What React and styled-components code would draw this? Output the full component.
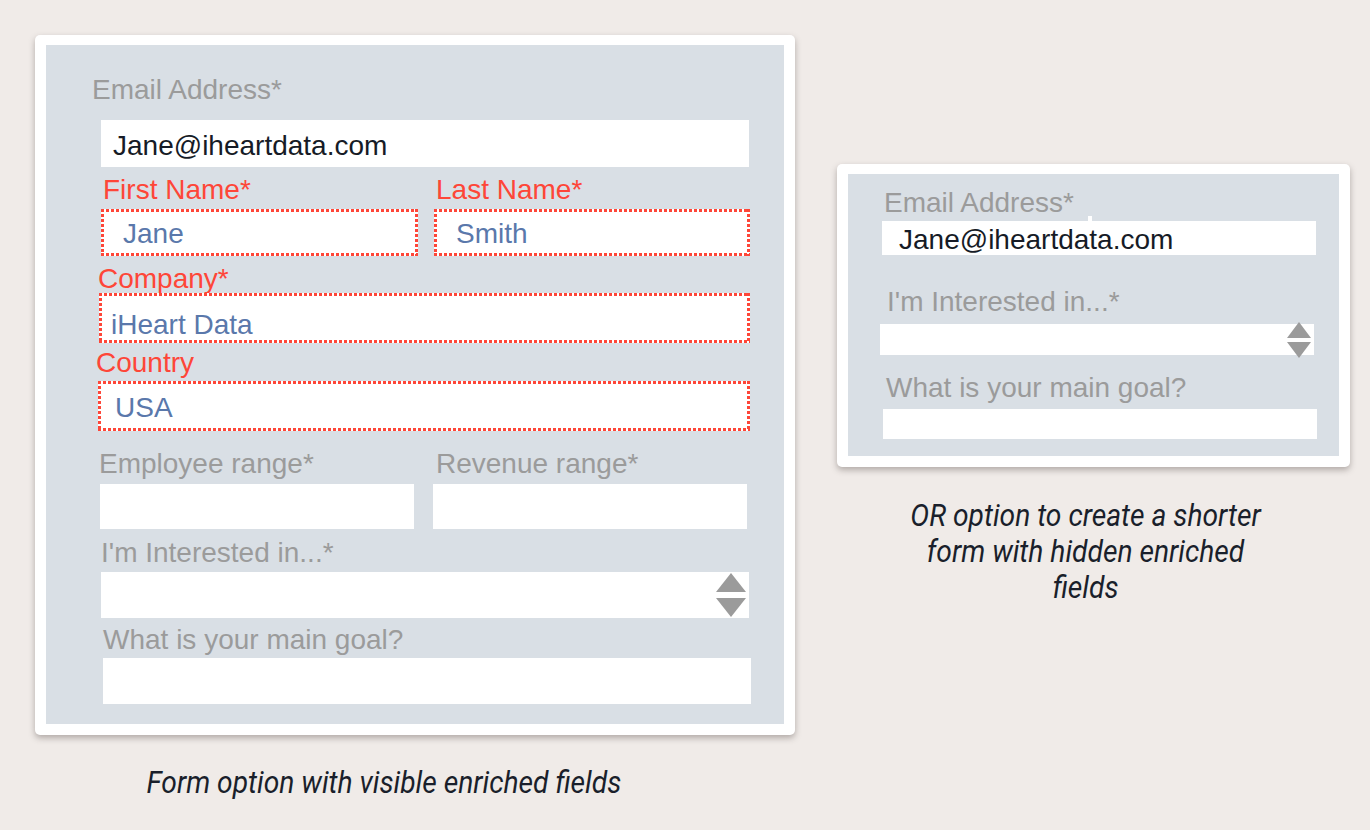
import React from 'react';
import styled, { createGlobalStyle, css } from 'styled-components';

const GlobalStyle = createGlobalStyle`
    html, body {
        margin: 0;
        padding: 0;
        background: #f0ebe8;
        font-family: "Liberation Sans", Arial, sans-serif;
    }
`;

const RED = '#fe4638';

const Page = styled.div`
    display: flex;
    align-items: flex-start;
    padding: 35px 0 0 35px;
    min-height: 100vh;
    box-sizing: border-box;
    background: #f0ebe8;
`;

const Column = styled.div`
    display: flex;
    flex-direction: column;
    margin-top: ${p => p.$top || 0}px;
    margin-left: ${p => p.$left || 0}px;
`;

const Frame = styled.div`
    background: #fff;
    padding: 10px 11px 11px 11px;
    border-radius: 5px;
    box-shadow: 0 3px 6px rgba(60, 50, 45, 0.35);
`;

const Panel = styled.div`
    width: ${p => p.$width}px;
    box-sizing: border-box;
    background: #d9dfe5;
    padding: ${p => p.$pad};
    display: flex;
    flex-direction: column;
`;

const Row = styled.div`
    display: flex;
    gap: ${p => p.$gap}px;
    margin-top: ${p => p.$mt || 0}px;
`;

const Field = styled.div`
    display: flex;
    flex-direction: column;
    margin-top: ${p => p.$mt || 0}px;
`;

const Label = styled.div`
    font-size: 28px;
    line-height: 28px;
    height: 28px;
    white-space: nowrap;
    color: ${p => (p.$red ? RED : '#9b9b9b')};
    margin-left: ${p => p.$dx || 0}px;
    margin-bottom: ${p => p.$gap || 0}px;
`;

// square red dots along every edge, like the mockup's dotted outline
const dotted = css`
    background:
        repeating-linear-gradient(90deg, ${RED} 0 3px, transparent 3px 5px) left top / 100% 3px no-repeat,
        repeating-linear-gradient(90deg, ${RED} 0 3px, transparent 3px 5px) left bottom / 100% 3px no-repeat,
        repeating-linear-gradient(180deg, ${RED} 0 3px, transparent 3px 5px) left top / 3px 100% no-repeat,
        repeating-linear-gradient(180deg, ${RED} 0 3px, transparent 3px 5px) right top / 3px 100% no-repeat,
        #fff;
`;

const Box = styled.div`
    position: relative;
    box-sizing: border-box;
    width: ${p => p.$w}px;
    height: ${p => p.$h}px;
    margin-left: ${p => p.$dx || 0}px;
    background: #fff;
    ${p => p.$dotted && dotted}
    padding: ${p => p.$pad || '0 0 0 12px'};
    display: flex;
    align-items: center;
    font-size: 28px;
    line-height: 32px;
    color: ${p => (p.$filled ? '#5a78ab' : '#161b26')};
    white-space: nowrap;
`;

const Tick = styled.span`
    position: absolute;
    left: 206px;
    top: -5px;
    width: 4px;
    height: 5px;
    background: #fff;
`;

const SpinnerWrap = styled.div`
    position: absolute;
    right: 3px;
    top: 50%;
    transform: translateY(-50%);
    display: flex;
    flex-direction: column;
    gap: ${p => p.$gap}px;
`;

const Caption = styled.div`
    width: ${p => p.$width}px;
    margin-top: ${p => p.$mt}px;
    text-align: center;
    font-family: "Roboto", "Liberation Sans", sans-serif;
    font-style: italic;
    font-size: 31px;
    line-height: 36px;
    color: #1a1f2b;
`;

const CaptionText = styled.span`
    display: inline-block;
    transform: scaleX(0.91);
    transform-origin: center;
`;

const Spinner = ({ w, h, gap }) => (
    <SpinnerWrap $gap={gap}>
        <svg width={w} height={h} viewBox={`0 0 ${w} ${h}`}>
            <polygon points={`${w / 2},0 ${w},${h} 0,${h}`} fill="#9b9b9b" />
        </svg>
        <svg width={w} height={h} viewBox={`0 0 ${w} ${h}`}>
            <polygon points={`0,0 ${w},0 ${w / 2},${h}`} fill="#9b9b9b" />
        </svg>
    </SpinnerWrap>
);

const LongForm = () => (
    <Frame>
        <Panel $width={738} $pad="31px 0 20px 54px">
            <Field>
                <Label $dx={-8} $gap={16}>Email Address*</Label>
                <Box $w={648} $h={47} $dx={1} $pad="4px 0 0 12px">
                    Jane@iheartdata.com
                </Box>
            </Field>
            <Row $gap={16} $mt={9}>
                <Field>
                    <Label $red $dx={3} $gap={5}>First Name*</Label>
                    <Box $w={317} $h={47} $dx={1} $dotted $filled $pad="3px 0 0 22px">
                        Jane
                    </Box>
                </Field>
                <Field>
                    <Label $red $dx={2} $gap={5}>Last Name*</Label>
                    <Box $w={316} $h={47} $dotted $filled $pad="3px 0 0 22px">
                        Smith
                    </Box>
                </Field>
            </Row>
            <Field $mt={9}>
                <Label $red $dx={-2} $gap={0}>Company*</Label>
                <Box $w={651} $h={50} $dx={-1} $dotted $filled $pad="13px 0 0 12px">
                    iHeart Data
                </Box>
            </Field>
            <Field $mt={6}>
                <Label $red $dx={-4} $gap={4}>Country</Label>
                <Box $w={652} $h={50} $dx={-2} $dotted $filled $pad="3px 0 0 17px">
                    USA
                </Box>
            </Field>
            <Row $gap={19} $mt={19}>
                <Field>
                    <Label $dx={-1} $gap={6}>Employee range*</Label>
                    <Box $w={314} $h={45} />
                </Field>
                <Field>
                    <Label $dx={3} $gap={6}>Revenue range*</Label>
                    <Box $w={314} $h={45} />
                </Field>
            </Row>
            <Field $mt={10}>
                <Label $dx={1} $gap={5}>I'm Interested in...*</Label>
                <Box $w={648} $h={46} $dx={1}>
                    <Spinner w={30} h={19} gap={6} />
                </Box>
            </Field>
            <Field $mt={8}>
                <Label $dx={3} $gap={4}>What is your main goal?</Label>
                <Box $w={648} $h={46} $dx={3} />
            </Field>
        </Panel>
    </Frame>
);

const ShortForm = () => (
    <Frame>
        <Panel $width={491} $pad="15px 0 17px 34px">
            <Field>
                <Label $dx={2} $gap={4}>Email Address*</Label>
                <Box $w={434} $h={34} $pad="3px 0 0 17px">
                    <Tick />
                    Jane@iheartdata.com
                </Box>
            </Field>
            <Field $mt={33}>
                <Label $dx={5} $gap={8}>I'm Interested in...*</Label>
                <Box $w={434} $h={31} $dx={-2}>
                    <Spinner w={24} h={16} gap={4} />
                </Box>
            </Field>
            <Field $mt={19}>
                <Label $dx={4} $gap={7}>What is your main goal?</Label>
                <Box $w={434} $h={30} $dx={1} />
            </Field>
        </Panel>
    </Frame>
);

const App = () => (
    <>
        <GlobalStyle />
        <Page>
            <Column>
                <LongForm />
                <Caption $width={698} $mt={30}>
                    <CaptionText>Form option with visible enriched fields</CaptionText>
                </Caption>
            </Column>
            <Column $top={129} $left={42}>
                <ShortForm />
                <Caption $width={498} $mt={31}>
                    <CaptionText>
                        OR option to create a shorter
                        <br />
                        form with hidden enriched
                        <br />
                        fields
                    </CaptionText>
                </Caption>
            </Column>
        </Page>
    </>
);

export default App;
